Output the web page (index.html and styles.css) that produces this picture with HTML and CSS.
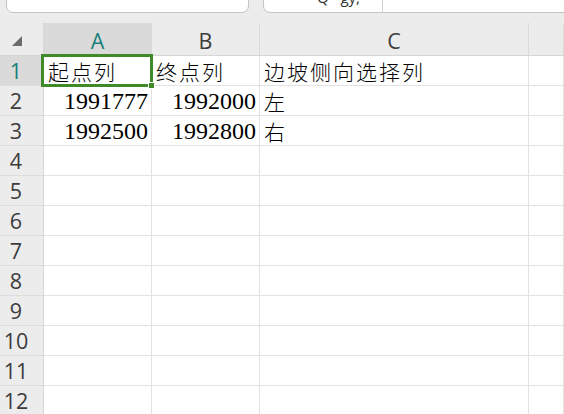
FILE: index.html
```html
<!DOCTYPE html>
<html lang="zh-CN">
<head>
  <meta charset="UTF-8">
  <meta name="viewport" content="width=device-width, initial-scale=1.0">
  <title>Sheet1</title>
  <link rel="stylesheet" href="styles.css">
</head>
<body>
  <div class="topbar">
    <div class="namebox"></div>
    <div class="formula">
      <span class="formula-text">Q&nbsp;&nbsp;gy,</span>
      <span class="formula-sep"></span>
    </div>
  </div>

  <div class="sheet">
    <div class="grid">
      <div class="corner">
        <svg width="10" height="10" viewBox="0 0 10 10"><path d="M10 0 L10 10 L0 10 Z" fill="#6b6b6b"/></svg>
      </div>
      <div class="col-head active">A</div>
      <div class="col-head">B</div>
      <div class="col-head">C</div>
      <div class="col-head"></div>

      <div class="row-head active">1</div>
      <div class="cell text">起点列</div>
      <div class="cell text">终点列</div>
      <div class="cell text">边坡侧向选择列</div>
      <div class="cell"></div>

      <div class="row-head">2</div>
      <div class="cell num">1991777</div>
      <div class="cell num">1992000</div>
      <div class="cell text">左</div>
      <div class="cell"></div>

      <div class="row-head">3</div>
      <div class="cell num">1992500</div>
      <div class="cell num">1992800</div>
      <div class="cell text">右</div>
      <div class="cell"></div>

      <div class="row-head">4</div><div class="cell"></div><div class="cell"></div><div class="cell"></div><div class="cell"></div>
      <div class="row-head">5</div><div class="cell"></div><div class="cell"></div><div class="cell"></div><div class="cell"></div>
      <div class="row-head">6</div><div class="cell"></div><div class="cell"></div><div class="cell"></div><div class="cell"></div>
      <div class="row-head">7</div><div class="cell"></div><div class="cell"></div><div class="cell"></div><div class="cell"></div>
      <div class="row-head">8</div><div class="cell"></div><div class="cell"></div><div class="cell"></div><div class="cell"></div>
      <div class="row-head">9</div><div class="cell"></div><div class="cell"></div><div class="cell"></div><div class="cell"></div>
      <div class="row-head">10</div><div class="cell"></div><div class="cell"></div><div class="cell"></div><div class="cell"></div>
      <div class="row-head">11</div><div class="cell"></div><div class="cell"></div><div class="cell"></div><div class="cell"></div>
      <div class="row-head">12</div><div class="cell"></div><div class="cell"></div><div class="cell"></div><div class="cell"></div>
    </div>

    <!-- active cell frame + fill handle -->
    <div class="selection"><span class="handle"></span></div>
  </div>
</body>
</html>
```

FILE: styles.css
```css
html, body {
  margin: 0;
  padding: 0;
  background: #ececec;
  overflow: hidden;
}
body {
  width: 564px;
  height: 414px;
}

/* name box + formula bar, mostly scrolled out of view */
.topbar {
  height: 23px;
  display: flex;
  align-items: flex-start;
  gap: 14px;
  padding-left: 6px;
}
.namebox,
.formula {
  box-sizing: border-box;
  height: 38px;
  margin-top: -25px;
  background: #fff;
  border: 1px solid #c4c4c4;
  border-radius: 0 0 7px 7px;
}
.namebox {
  width: 243px;
}
.formula {
  flex: 1;
  margin-right: -20px;
  display: flex;
  align-items: flex-end;
  padding: 0 0 0 53px;
}
.formula-text {
  font-family: "Open Sans", sans-serif;
  font-size: 15px;
  line-height: 15px;
  height: 15px;
  margin-bottom: 7px;
  color: #333;
  word-spacing: 2px;
}
.formula-sep {
  width: 1px;
  height: 14px;
  background: #d0d0d0;
  margin-left: 22px;
}

.sheet {
  position: relative;
}
.grid {
  display: grid;
  grid-template-columns: 44px 108px 108px 269px 1fr;
  grid-template-rows: 33px repeat(12, 30px);
  background: #fff;
}

.corner,
.col-head,
.row-head,
.cell {
  box-sizing: border-box;
  border-right: 1px solid #e2e2e2;
  border-bottom: 1px solid #e2e2e2;
  overflow: hidden;
  white-space: nowrap;
}

.corner {
  background: #ececec;
  border-bottom-color: #d6d6d6;
  border-right-color: #d6d6d6;
  padding: 13px 0 0 12px;
}
.corner svg {
  display: block;
}

.col-head,
.row-head {
  background: #ececec;
  font-family: "Open Sans", sans-serif;
  font-size: 21.5px;
  color: #3c3c3c;
  display: flex;
  align-items: center;
  justify-content: center;
}
.col-head {
  border-right-color: #dadada;
  border-bottom-color: #d6d6d6;
  padding-top: 2px;
}
.row-head {
  border-right-color: #d6d6d6;
  border-bottom-color: #dddddd;
  padding-right: 11px;
}
.col-head.active,
.row-head.active {
  background: #dadada;
  color: #16807a;
}

.cell {
  color: #000;
  display: flex;
  align-items: center;
}
.cell.text {
  font-family: "Noto Sans CJK SC", sans-serif;
  font-weight: 300;
  font-size: 21px;
  letter-spacing: 2px;
  padding-left: 4px;
  padding-top: 1px;
}
.cell.num {
  font-family: "Liberation Serif", serif;
  font-size: 24px;
  justify-content: flex-end;
  padding-right: 3px;
  padding-top: 2px;
}

.selection {
  position: absolute;
  left: 41px;
  top: 31px;
  width: 112px;
  height: 33px;
  box-sizing: border-box;
  border: 3px solid #3f8b2a;
  pointer-events: none;
}
.handle {
  position: absolute;
  right: -5px;
  bottom: -5px;
  width: 5px;
  height: 5px;
  background: #3f8b2a;
  border: 1px solid #fff;
}
```
